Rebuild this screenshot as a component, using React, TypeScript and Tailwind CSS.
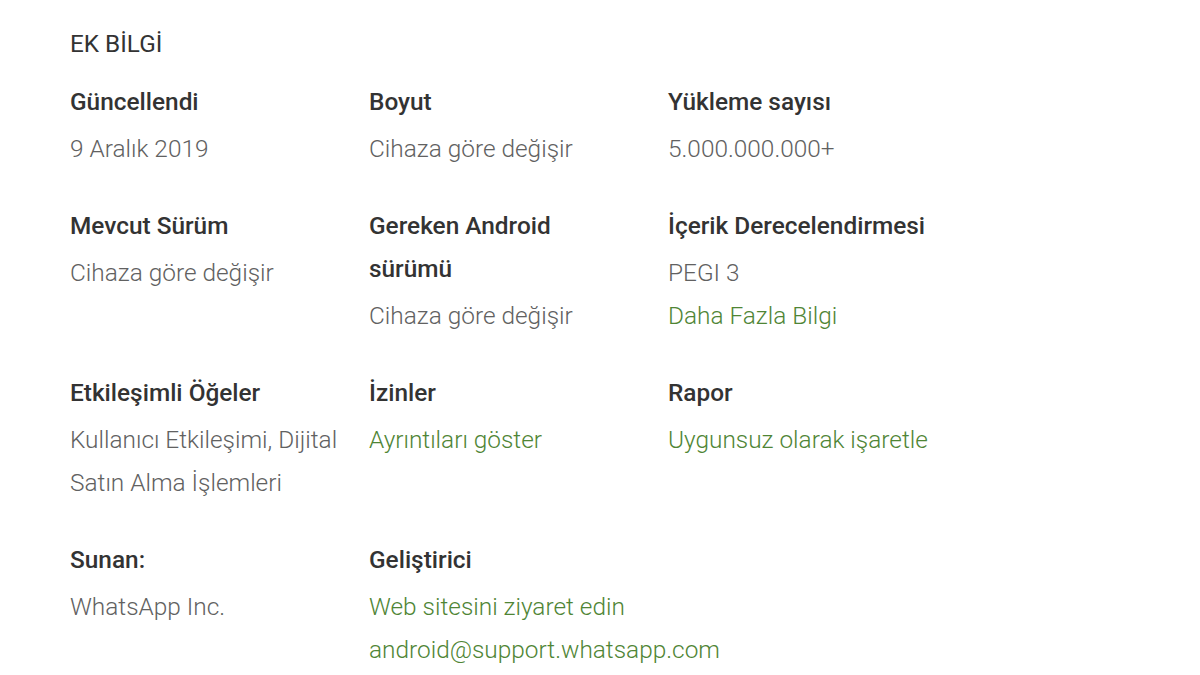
const items: { label: string[]; values: { text: string; link?: boolean }[] }[] = [
  { label: ["Güncellendi"], values: [{ text: "9 Aralık 2019" }] },
  { label: ["Boyut"], values: [{ text: "Cihaza göre değişir" }] },
  { label: ["Yükleme sayısı"], values: [{ text: "5.000.000.000+" }] },
  { label: ["Mevcut Sürüm"], values: [{ text: "Cihaza göre değişir" }] },
  { label: ["Gereken Android", "sürümü"], values: [{ text: "Cihaza göre değişir" }] },
  { label: ["İçerik Derecelendirmesi"], values: [{ text: "PEGI 3" }, { text: "Daha Fazla Bilgi", link: true }] },
  { label: ["Etkileşimli Öğeler"], values: [{ text: "Kullanıcı Etkileşimi, Dijital" }, { text: "Satın Alma İşlemleri" }] },
  { label: ["İzinler"], values: [{ text: "Ayrıntıları göster", link: true }] },
  { label: ["Rapor"], values: [{ text: "Uygunsuz olarak işaretle", link: true }] },
  { label: ["Sunan:"], values: [{ text: "WhatsApp Inc." }] },
  { label: ["Geliştirici"], values: [{ text: "Web sitesini ziyaret edin", link: true }, { text: "android@support.whatsapp.com", link: true }] },
];

export default function App() {
  return (
    <div className="min-h-[675px] w-[1200px] bg-white pl-[70px] pt-[28px] font-['Roboto',sans-serif]">
      <h2 className="text-[24.3px] leading-[32px] font-normal text-[#333]">EK BİLGİ</h2>
      <div className="mt-[20px] grid grid-cols-[299px_299px_299px] gap-y-[33px]">
        {items.map((item) => (
          <div key={item.label.join(" ")}>
            <div className="text-[24.4px] leading-[43px] font-medium text-[#333]">
              {item.label.map((line) => (
                <div key={line}>{line}</div>
              ))}
            </div>
            <div className="mt-1 text-[24.4px] leading-[43.5px] font-light">
              {item.values.map((v) => (
                <div key={v.text} className={v.link ? "text-[#4f8535]" : "text-[#616161]"}>
                  {v.text}
                </div>
              ))}
            </div>
          </div>
        ))}
      </div>
    </div>
  );
}
